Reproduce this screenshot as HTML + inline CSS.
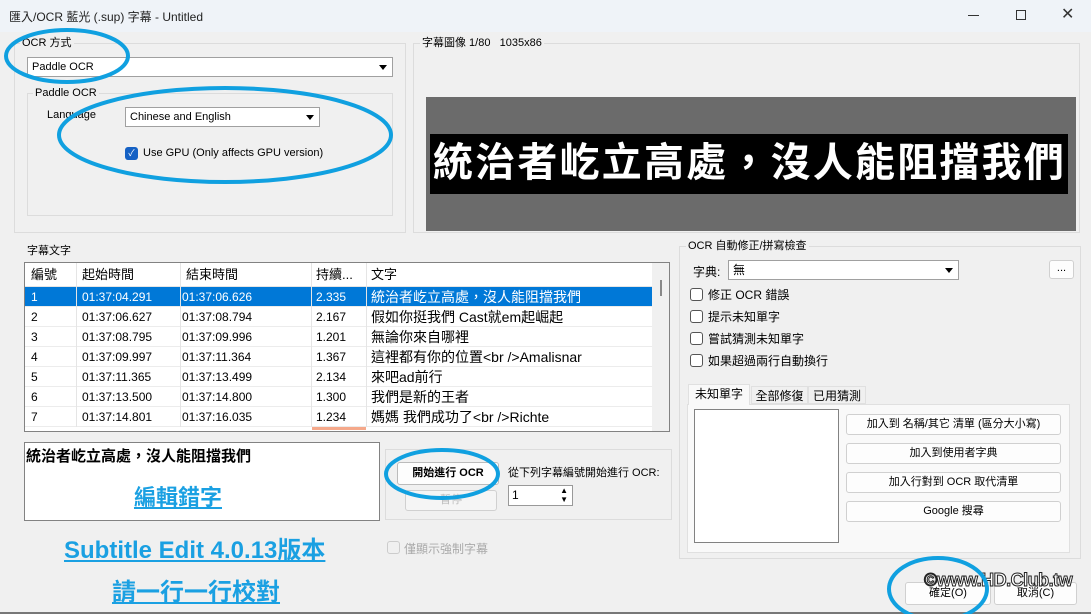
<!DOCTYPE html>
<html><head><meta charset="utf-8"><style>
*{box-sizing:border-box;margin:0;padding:0}
body{width:1091px;height:614px;background:#f0f0f0;font-family:"Liberation Sans","Noto Sans CJK TC",sans-serif;font-size:12px;color:#000;position:relative;overflow:hidden}
.a{position:absolute;white-space:nowrap}
.gb{position:absolute;border:1px solid #dcdcdc}
.lbl{position:absolute;background:#f0f0f0;padding:0 2px;font-size:11px;line-height:12px}
.cb{position:absolute;background:#fff;border:1px solid #a0a0a0;height:20px;font-size:11px;line-height:18px;padding-left:4px}
.cb:after{content:"";position:absolute;right:5px;top:7px;border:4px solid transparent;border-top:5px solid #000}
.btn{position:absolute;background:#fdfdfd;border:1px solid #d0d0d0;border-radius:3px;text-align:center;font-size:11px;line-height:18px}
.chk{position:absolute;width:13px;height:13px;border:1px solid #555;border-radius:3px;background:#fff}
.row{position:absolute;left:25px;width:627px;height:20px;border-bottom:1px solid #ececec;font-size:12px;line-height:20px}
.row span{position:absolute;top:0}
.blue{position:absolute;color:#1aa0e2;font-weight:bold;text-decoration:underline;text-align:center;white-space:nowrap}
</style></head><body>
<div class="a" style="left:0;top:0;width:1091px;height:32px;background:#eff3f8"></div>
<div class="a" style="left:9px;top:8px;font-size:12px;color:#222">匯入/OCR 藍光 (.sup) 字幕 - Untitled</div>
<div class="a" style="left:968px;top:15px;width:11px;height:1px;background:#333"></div>
<div class="a" style="left:1016px;top:10px;width:10px;height:10px;border:1px solid #333"></div>
<div class="a" style="left:1061px;top:4px;font-size:16px;color:#333">✕</div>

<div class="gb" style="left:14px;top:43px;width:392px;height:190px"></div>
<div class="lbl" style="left:20px;top:37px">OCR 方式</div>
<div class="cb" style="left:27px;top:57px;width:366px">Paddle OCR</div>
<div class="gb" style="left:27px;top:93px;width:366px;height:123px"></div>
<div class="lbl" style="left:33px;top:87px">Paddle OCR</div>
<div class="a" style="left:47px;top:109px;font-size:11px">Language</div>
<div class="cb" style="left:125px;top:107px;width:195px">Chinese and English</div>
<div class="a" style="left:125px;top:147px;width:13px;height:13px;background:#1561c4;border-radius:3px;color:#fff;font-size:9px;line-height:13px;text-align:center">✓</div>
<div class="a" style="left:143px;top:147px;font-size:11px">Use GPU (Only affects GPU version)</div>

<div class="gb" style="left:413px;top:43px;width:667px;height:190px"></div>
<div class="lbl" style="left:420px;top:37px">字幕圖像 1/80 &nbsp; 1035x86</div>
<div class="a" style="left:426px;top:97px;width:650px;height:134px;background:#6b6b6b"></div>
<div class="a" style="left:430px;top:134px;width:638px;height:60px;background:#000"></div>
<div class="a" style="left:433px;top:137px;font-size:40px;line-height:52px;font-weight:bold;color:#fff;letter-spacing:2.2px">統治者屹立高處，沒人能阻擋我們</div>

<div class="lbl" style="left:25px;top:245px">字幕文字</div>
<div class="a" style="left:24px;top:262px;width:646px;height:170px;background:#fff;border:1px solid #828282"></div>
<div class="a" style="left:652px;top:263px;width:17px;height:168px;background:#f0f0f0"></div>
<div class="a" style="left:660px;top:280px;width:2px;height:16px;background:#888"></div>
<div class="a" style="left:25px;top:263px;width:627px;height:24px;font-size:13px;line-height:23px;border-bottom:1px solid #e5e5e5">
<span class="a" style="left:6px">編號</span><span class="a" style="left:57px">起始時間</span><span class="a" style="left:161px">結束時間</span><span class="a" style="left:291px">持續...</span><span class="a" style="left:346px">文字</span>
<div class="a" style="left:51px;top:0;width:1px;height:24px;background:#e5e5e5"></div><div class="a" style="left:155px;top:0;width:1px;height:24px;background:#e5e5e5"></div><div class="a" style="left:286px;top:0;width:1px;height:24px;background:#e5e5e5"></div><div class="a" style="left:341px;top:0;width:1px;height:24px;background:#e5e5e5"></div></div>
<div class="row" style="top:287px;background:#0078d7;color:#fff"><span style="left:6px">1</span><span style="left:57px">01:37:04.291</span><span style="left:157px">01:37:06.626</span><span style="left:291px">2.335</span><span style="left:346px;font-size:14px">統治者屹立高處，沒人能阻擋我們</span></div>
<div class="row" style="top:307px"><span style="left:6px">2</span><span style="left:57px">01:37:06.627</span><span style="left:157px">01:37:08.794</span><span style="left:291px">2.167</span><span style="left:346px;font-size:14px">假如你挺我們 Cast就em起崛起</span></div>
<div class="row" style="top:327px"><span style="left:6px">3</span><span style="left:57px">01:37:08.795</span><span style="left:157px">01:37:09.996</span><span style="left:291px">1.201</span><span style="left:346px;font-size:14px">無論你來自哪裡</span></div>
<div class="row" style="top:347px"><span style="left:6px">4</span><span style="left:57px">01:37:09.997</span><span style="left:157px">01:37:11.364</span><span style="left:291px">1.367</span><span style="left:346px;font-size:14px">這裡都有你的位置&lt;br /&gt;Amalisnar</span></div>
<div class="row" style="top:367px"><span style="left:6px">5</span><span style="left:57px">01:37:11.365</span><span style="left:157px">01:37:13.499</span><span style="left:291px">2.134</span><span style="left:346px;font-size:14px">來吧ad前行</span></div>
<div class="row" style="top:387px"><span style="left:6px">6</span><span style="left:57px">01:37:13.500</span><span style="left:157px">01:37:14.800</span><span style="left:291px">1.300</span><span style="left:346px;font-size:14px">我們是新的王者</span></div>
<div class="row" style="top:407px"><span style="left:6px">7</span><span style="left:57px">01:37:14.801</span><span style="left:157px">01:37:16.035</span><span style="left:291px">1.234</span><span style="left:346px;font-size:14px">媽媽 我們成功了&lt;br /&gt;Richte</span></div>
<div class="a" style="left:76px;top:287px;width:1px;height:140px;background:#e5e5e5"></div>
<div class="a" style="left:180px;top:287px;width:1px;height:140px;background:#e5e5e5"></div>
<div class="a" style="left:311px;top:287px;width:1px;height:140px;background:#e5e5e5"></div>
<div class="a" style="left:366px;top:287px;width:1px;height:140px;background:#e5e5e5"></div>
<div class="a" style="left:312px;top:427px;width:54px;height:3px;background:#f5a88a"></div>

<div class="a" style="left:24px;top:442px;width:356px;height:79px;background:#fff;border:1px solid #828282"></div>
<div class="a" style="left:26px;top:445px;font-size:15px;font-weight:bold">統治者屹立高處，沒人能阻擋我們</div>
<div class="blue" style="left:100px;top:480px;width:156px;font-size:22px">編輯錯字</div>

<div class="gb" style="left:385px;top:449px;width:287px;height:71px"></div>
<div class="btn" style="left:397px;top:462px;width:102px;height:23px;font-weight:bold;line-height:21px;border-color:#bbb">開始進行 OCR</div>
<div class="btn" style="left:405px;top:490px;width:92px;height:21px;color:#bbb;background:#f5f5f5">暫停</div>
<div class="a" style="left:508px;top:464px;font-size:11px">從下列字幕編號開始進行 OCR:</div>
<div class="a" style="left:508px;top:485px;width:65px;height:21px;background:#fff;border:1px solid #999;font-size:12px;line-height:19px;padding-left:3px">1<span class="a" style="right:4px;top:0;font-size:8px;line-height:9px">▲<br>▼</span></div>
<div class="a" style="left:387px;top:541px;width:13px;height:13px;border:1px solid #ccc;border-radius:3px"></div>
<div class="a" style="left:404px;top:540px;font-size:12px;color:#aaa">僅顯示強制字幕</div>
<div class="blue" style="left:64px;top:530px;font-size:24px">Subtitle Edit 4.0.13版本</div>
<div class="blue" style="left:112px;top:572px;font-size:24px">請一行一行校對</div>

<div class="gb" style="left:679px;top:246px;width:402px;height:313px"></div>
<div class="lbl" style="left:686px;top:240px">OCR 自動修正/拼寫檢查</div>
<div class="a" style="left:693px;top:263px;font-size:12px">字典:</div>
<div class="cb" style="left:728px;top:260px;width:231px;font-size:12px">無</div>
<div class="btn" style="left:1049px;top:260px;width:25px;height:19px;line-height:15px">...</div>
<div class="chk" style="left:690px;top:288px"></div><div class="a" style="left:708px;top:286px">修正 OCR 錯誤</div>
<div class="chk" style="left:690px;top:310px"></div><div class="a" style="left:708px;top:308px">提示未知單字</div>
<div class="chk" style="left:690px;top:332px"></div><div class="a" style="left:708px;top:330px">嘗試猜測未知單字</div>
<div class="chk" style="left:690px;top:354px"></div><div class="a" style="left:708px;top:352px">如果超過兩行自動換行</div>
<div class="a" style="left:687px;top:404px;width:383px;height:149px;background:#f9f9f9;border:1px solid #e0e0e0"></div>
<div class="a" style="left:688px;top:384px;width:62px;height:21px;background:#f9f9f9;border:1px solid #e0e0e0;border-bottom:none;text-align:center;line-height:19px">未知單字</div>
<div class="a" style="left:751px;top:386px;width:57px;height:18px;border:1px solid #e0e0e0;text-align:center;line-height:18px">全部修復</div>
<div class="a" style="left:808px;top:386px;width:58px;height:18px;border:1px solid #e0e0e0;text-align:center;line-height:18px">已用猜測</div>
<div class="a" style="left:694px;top:409px;width:145px;height:134px;background:#fff;border:1px solid #828282"></div>
<div class="btn" style="left:846px;top:414px;width:215px;height:21px">加入到 名稱/其它 清單 (區分大小寫)</div>
<div class="btn" style="left:846px;top:443px;width:215px;height:21px">加入到使用者字典</div>
<div class="btn" style="left:846px;top:472px;width:215px;height:21px">加入行對到 OCR 取代清單</div>
<div class="btn" style="left:846px;top:501px;width:215px;height:21px">Google 搜尋</div>
<div class="btn" style="left:905px;top:582px;width:86px;height:23px;line-height:21px">確定(O)</div>
<div class="btn" style="left:994px;top:582px;width:83px;height:23px;line-height:21px">取消(C)</div>
<div class="a" style="left:924px;top:570px;font-size:18px;font-weight:bold;color:#fff;-webkit-text-stroke:1px #222;letter-spacing:-0.5px">©www.HD.Club.tw</div>
<div class="a" style="left:0;top:612px;width:1091px;height:2px;background:#777"></div>

<svg class="a" style="left:0;top:0" width="1091" height="614">
<g fill="none" stroke="#10a0e0" stroke-width="4">
<ellipse cx="67" cy="56" rx="61" ry="26"/>
<ellipse cx="225" cy="135" rx="166" ry="47"/>
<ellipse cx="442" cy="474" rx="56" ry="24"/>
<ellipse cx="938" cy="589" rx="49" ry="31"/>
</g></svg>
</body></html>
